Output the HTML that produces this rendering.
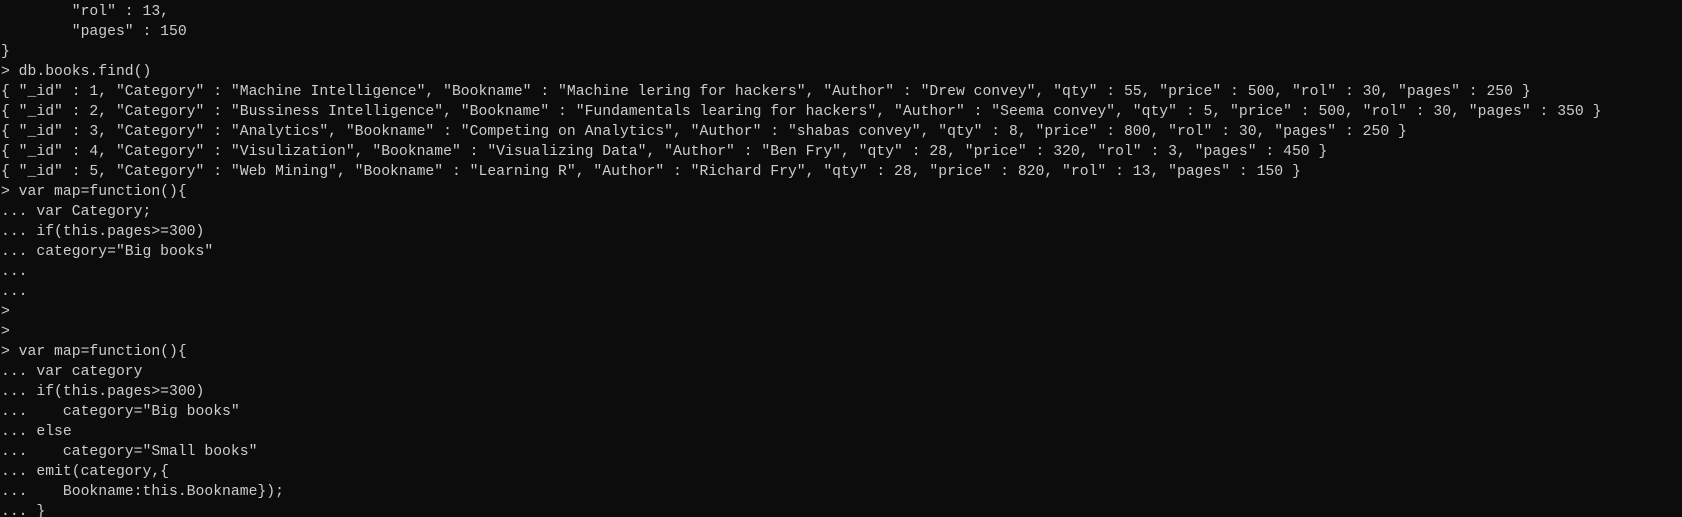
<!DOCTYPE html>
<html><head><meta charset="utf-8"><style>
html,body{margin:0;padding:0;background:#0c0c0c;width:1682px;height:517px;overflow:hidden}
pre{margin:0;padding:3px 0 0 1px;color:#cccccc;font-family:"Liberation Mono",monospace;font-size:14.74px;line-height:19.98px;white-space:pre}
</style></head><body><pre>        "rol" : 13,
        "pages" : 150
}
&gt; db.books.find()
{ "_id" : 1, "Category" : "Machine Intelligence", "Bookname" : "Machine lering for hackers", "Author" : "Drew convey", "qty" : 55, "price" : 500, "rol" : 30, "pages" : 250 }
{ "_id" : 2, "Category" : "Bussiness Intelligence", "Bookname" : "Fundamentals learing for hackers", "Author" : "Seema convey", "qty" : 5, "price" : 500, "rol" : 30, "pages" : 350 }
{ "_id" : 3, "Category" : "Analytics", "Bookname" : "Competing on Analytics", "Author" : "shabas convey", "qty" : 8, "price" : 800, "rol" : 30, "pages" : 250 }
{ "_id" : 4, "Category" : "Visulization", "Bookname" : "Visualizing Data", "Author" : "Ben Fry", "qty" : 28, "price" : 320, "rol" : 3, "pages" : 450 }
{ "_id" : 5, "Category" : "Web Mining", "Bookname" : "Learning R", "Author" : "Richard Fry", "qty" : 28, "price" : 820, "rol" : 13, "pages" : 150 }
&gt; var map=function(){
... var Category;
... if(this.pages&gt;=300)
... category="Big books"
...
...
&gt;
&gt;
&gt; var map=function(){
... var category
... if(this.pages&gt;=300)
...    category="Big books"
... else
...    category="Small books"
... emit(category,{
...    Bookname:this.Bookname});
... }
</pre></body></html>
